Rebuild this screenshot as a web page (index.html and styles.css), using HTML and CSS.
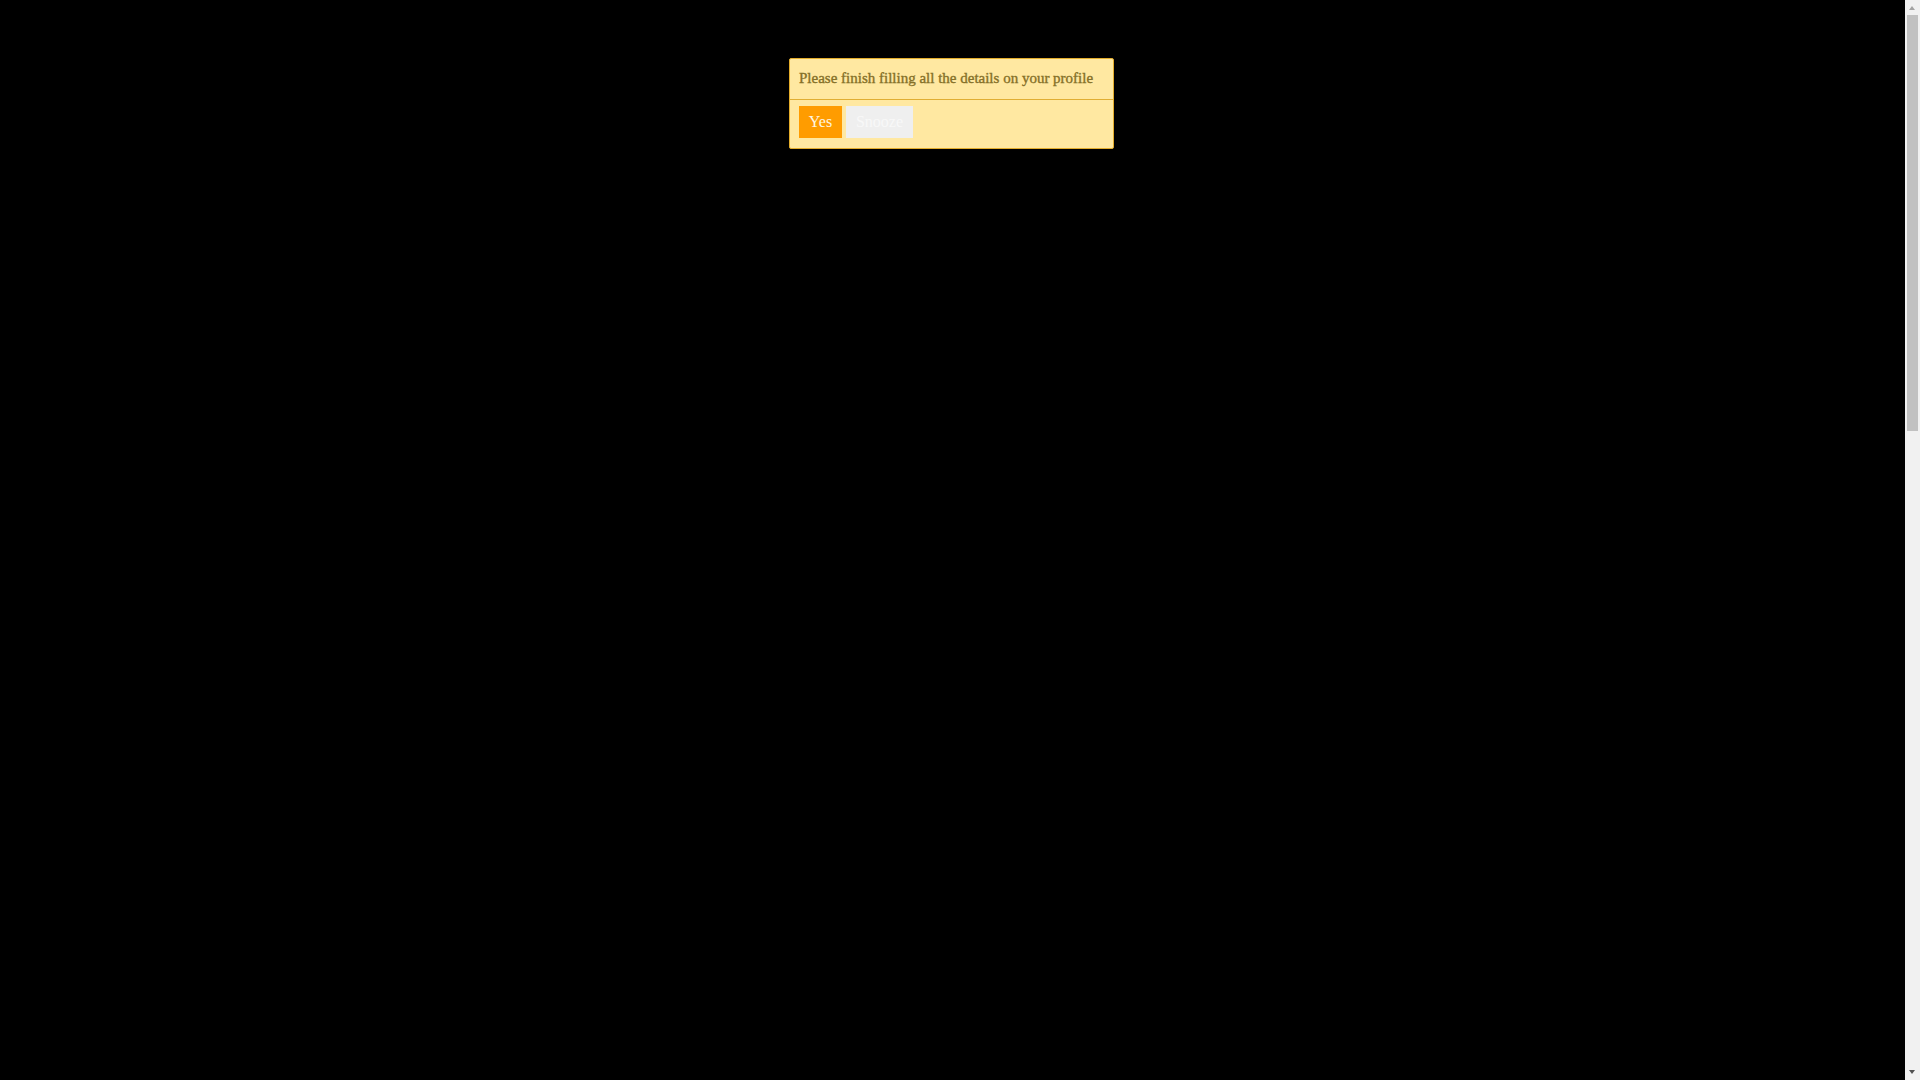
FILE: index.html
```html
<!DOCTYPE html>
<html>
<head>
<meta charset="utf-8">
<link rel="stylesheet" href="styles.css">
</head>
<body>
<div class="screen">
  <main class="stage">
    <div class="notice">
      <div class="notice-head">Please finish filling all the details on your profile</div>
      <div class="notice-foot">
        <button class="btn btn-yes">Yes</button>
        <button class="btn btn-snooze">Snooze</button>
      </div>
    </div>
  </main>
  <div class="scrollbar">
    <div class="arrow arrow-up"></div>
    <div class="track"><div class="thumb"></div></div>
    <div class="arrow arrow-down"></div>
  </div>
</div>
</body>
</html>
```

FILE: styles.css
```css
html, body {
  margin: 0;
  padding: 0;
  height: 100%;
  overflow: hidden;
  background: #000;
}
.screen {
  display: flex;
  width: 1920px;
  height: 1080px;
}
.stage {
  flex: 1;
  background: #000;
  display: flex;
  flex-direction: column;
  align-items: center;
  padding: 58px 2px 0 0;
}
.notice {
  width: 323px;
  background: #ffe8a1;
  border: 1px solid #e3ad2c;
  border-radius: 2px;
  font-family: "Liberation Serif", "Times New Roman", serif;
}
.notice-head {
  height: 41px;
  box-sizing: border-box;
  padding: 11px 0 0 9px;
  font-size: 15px;
  color: #857028;
  -webkit-text-stroke: 0.35px #857028;
  border-bottom: 1px solid #e0ae34;
  white-space: nowrap;
}
.notice-foot {
  display: flex;
  gap: 4px;
  padding: 6px 9px 10px;
}
.btn {
  border: 0;
  margin: 0;
  height: 32px;
  font-family: "Liberation Serif", "Times New Roman", serif;
  font-size: 16px;
  color: #fff;
  padding: 0;
  cursor: pointer;
}
.btn-yes {
  width: 43px;
  background: #ff9c00;
  color: #fff6e0;
}
.btn-snooze {
  width: 67px;
  background: #efefef;
  color: #f8f8f8;
}
.scrollbar {
  width: 15px;
  background: #f1f1f1;
  display: flex;
  flex-direction: column;
}
.arrow {
  height: 15px;
  position: relative;
}
.arrow::after {
  content: "";
  position: absolute;
  left: 4px;
  width: 0;
  height: 0;
  border-left: 3.5px solid transparent;
  border-right: 3.5px solid transparent;
}
.arrow-up::after {
  top: 6px;
  border-bottom: 4px solid #a3a3a3;
}
.arrow-down::after {
  top: 5px;
  border-top: 4px solid #505050;
}
.track {
  flex: 1;
  padding: 0 2px;
}
.thumb {
  height: 416px;
  background: #c1c1c1;
}
```
